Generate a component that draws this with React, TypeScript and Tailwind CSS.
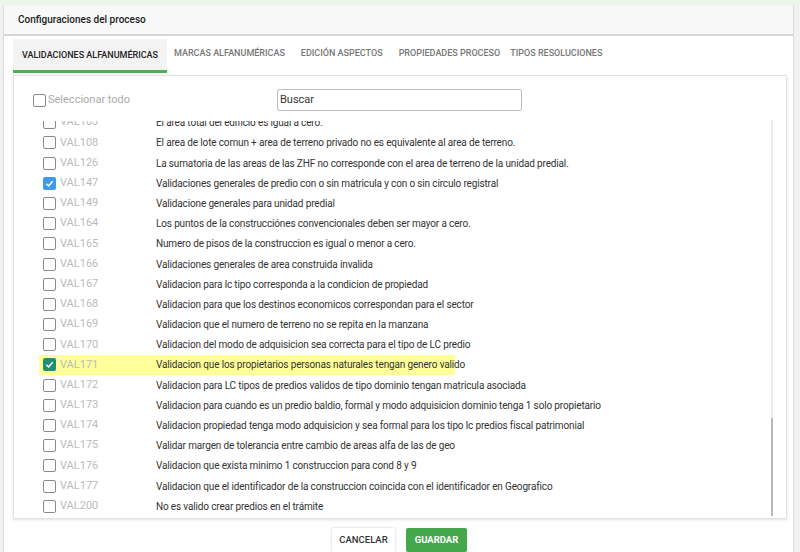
import React from 'react';

const rows: [string, string, boolean][] = [
  ['VAL103', 'El area total del edificio es igual a cero.', false],
  ['VAL108', 'El area de lote comun + area de terreno privado no es equivalente al area de terreno.', false],
  ['VAL126', 'La sumatoria de las areas de las ZHF no corresponde con el area de terreno de la unidad predial.', false],
  ['VAL147', 'Validaciones generales de predio con o sin matricula y con o sin circulo registral', true],
  ['VAL149', 'Validacione generales para unidad predial', false],
  ['VAL164', 'Los puntos de la construcciónes convencionales deben ser mayor a cero.', false],
  ['VAL165', 'Numero de pisos de la construccion es igual o menor a cero.', false],
  ['VAL166', 'Validaciones generales de area construida invalida', false],
  ['VAL167', 'Validacion para lc tipo corresponda a la condicion de propiedad', false],
  ['VAL168', 'Validacion para que los destinos economicos correspondan para el sector', false],
  ['VAL169', 'Validacion que el numero de terreno no se repita en la manzana', false],
  ['VAL170', 'Validacion del modo de adquisicion sea correcta para el tipo de LC predio', false],
  ['VAL171', 'Validacion que los propietarios personas naturales tengan genero valido', true],
  ['VAL172', 'Validacion para LC tipos de predios validos de tipo dominio tengan matricula asociada', false],
  ['VAL173', 'Validacion para cuando es un predio baldio, formal y modo adquisicion dominio tenga 1 solo propietario', false],
  ['VAL174', 'Validacion propiedad tenga modo adquisicion y sea formal para los tipo lc predios fiscal patrimonial', false],
  ['VAL175', 'Validar margen de tolerancia entre cambio de areas alfa de las de geo', false],
  ['VAL176', 'Validacion que exista minimo 1 construccion para cond 8 y 9', false],
  ['VAL177', 'Validacion que el identificador de la construccion coincida con el identificador en Geografico', false],
  ['VAL200', 'No es valido crear predios en el trámite', false],
];

function Box({ checked, teal }: { checked: boolean; teal?: boolean }) {
  if (checked)
    return (
      <span className={`shrink-0 w-[13px] h-[13px] rounded-[2px] flex items-center justify-center ${teal ? 'bg-[#1f8f70]' : 'bg-[#3d9be9]'}`}>
        <svg width="9" height="9" viewBox="0 0 10 10"><path d="M1.5 5.2 L4 7.6 L8.6 2.4" stroke="white" strokeWidth="1.6" fill="none" /></svg>
      </span>
    );
  return <span className="shrink-0 w-[13px] h-[13px] rounded-[2px] border border-[#8a8a8a] bg-white" />;
}

export default function App() {
  return (
    <div className="w-[800px] h-[552px] bg-[#f1f1f1] overflow-hidden relative" style={{ fontFamily: 'Roboto, "Liberation Sans", sans-serif' }}>
      <div className="h-[5px] bg-[#eaf7ea]" />
      <div className="mx-[3px] mr-[6px] h-[547px] bg-white border-x border-[#dcdcdc] flex flex-col">
        <div className="h-[31px] flex items-center pl-[14px] text-[10px] font-medium text-[#222] bg-[#f8f8f8] border-b-2 border-[#d6d6d6]">
          Configuraciones del proceso
        </div>
        <div className="flex h-[37px] items-end pl-[9px] text-[9px] font-medium text-[#777]">
          <div className="h-[34px] px-[9px] flex items-center text-[#222] bg-[#f3f3f3] border-b-[3px] border-[#4caf50] pt-[3px]">VALIDACIONES ALFANUMÉRICAS</div>
          <div className="h-[34px] px-[7px] flex items-center pb-[3px]">MARCAS ALFANUMÉRICAS</div>
          <div className="h-[34px] px-[9px] flex items-center pb-[3px]">EDICIÓN ASPECTOS</div>
          <div className="h-[34px] px-[7px] flex items-center pb-[3px]">PROPIEDADES PROCESO</div>
          <div className="h-[34px] px-[3px] flex items-center pb-[3px]">TIPOS RESOLUCIONES</div>
        </div>
        <div className="ml-[9px] mr-[6px] mt-[2px] h-[447px] border border-[#e2e2e2] shadow-[0_1px_3px_rgba(0,0,0,0.12)] flex flex-col relative">
          <div className="h-[45px] flex items-center">
            <div className="w-[263px] pl-[19px] flex items-center gap-[2px] text-[11px] text-[#aaa] pt-[4px]">
              <Box checked={false} /> Seleccionar todo
            </div>
            <div className="w-[245px] h-[22px] border border-[#bdbdbd] rounded-[2px] flex items-center pl-[2px] text-[11px] text-[#333] pt-[2px] mt-[3px]">Buscar</div>
          </div>
          <div className="flex-1 overflow-hidden mr-[18px]">
            <div className="-mt-[8px]">
              {rows.map(([code, desc, checked]) => {
                const hl = code === 'VAL171';
                return (
                  <div key={code} className={`h-[20.2px] flex items-center text-[10px] ${hl ? 'bg-[#ffff99] w-[416px]' : ''}`} style={{ marginLeft: 25, paddingLeft: 4 }}>
                    <Box checked={checked} teal={hl} />
                    <span className="shrink-0 w-[100px] pl-[4px] text-[11px] text-[#bbb]">{code}</span>
                    <span className="text-[#333] tracking-[-0.15px] whitespace-nowrap">{desc}</span>
                  </div>
                );
              })}
            </div>
          </div>
          <div className="absolute right-[13px] top-[44px] bottom-[2px] w-[2px] bg-[#ececec]">
            <div className="absolute bottom-0 left-0 w-[2px] h-[98px] bg-[#b8b8b8]" />
          </div>
        </div>
        <div className="flex justify-center gap-[11px] pt-[9px]">
          <div className="w-[63px] h-[24px] bg-white shadow-[0_0_3px_rgba(0,0,0,0.2)] rounded-[2px] flex items-center justify-center text-[9.5px] font-medium text-[#333] ml-[2px]">CANCELAR</div>
          <div className="w-[61px] h-[24px] bg-[#43a84a] rounded-[2px] flex items-center justify-center text-[9.5px] font-bold text-white">GUARDAR</div>
        </div>
      </div>
    </div>
  );
}
